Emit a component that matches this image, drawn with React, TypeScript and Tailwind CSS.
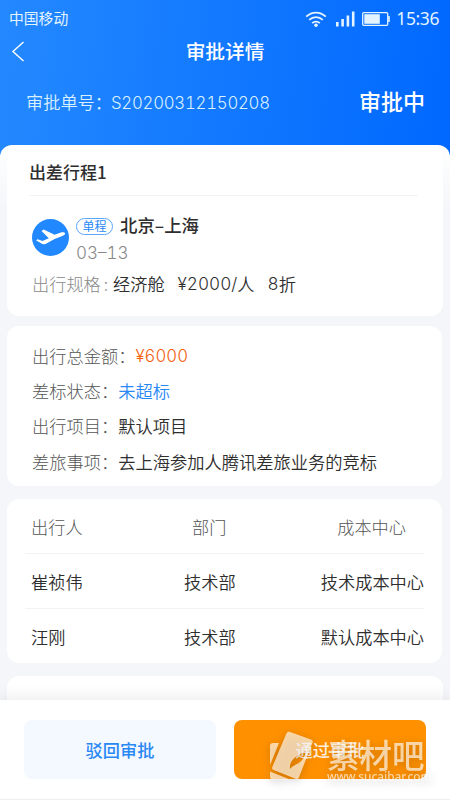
import type { ReactNode } from 'react';

const TRAVELERS = [
  { name: '崔祯伟', dept: '技术部', center: '技术成本中心' },
  { name: '汪刚', dept: '技术部', center: '默认成本中心' },
];

const SUMMARY = [
  { label: '出行总金额：', value: '¥6000', cls: 'text-[#f2600c]' },
  { label: '差标状态：', value: '未超标', cls: 'text-[#2a88f5]' },
  { label: '出行项目：', value: '默认项目', cls: 'text-[#2e2e2e]' },
  { label: '差旅事项：', value: '去上海参加人腾讯差旅业务的竞标', cls: 'text-[#2e2e2e]' },
];

function Num({ children, className = '' }: { children: ReactNode; className?: string }) {
  return (
    <span className={`tabular-nums [font-family:Inter,sans-serif] ${className}`}>{children}</span>
  );
}

// ── Status bar ───────────────────────────────────────────────
function StatusBar() {
  return (
    <div className="flex h-[37px] items-center justify-between pl-[9px] pr-[11px] text-[#e4f4ff]">
      <span className="text-[14.8px] leading-none">中国移动</span>
      <div className="flex items-center">
        <svg className="mt-px" width="22" height="17" viewBox="0 0 22 17" fill="none" stroke="currentColor" strokeWidth="1.8">
          <path d="M1.2 5.7C7 .3 15 .3 20.8 5.7M4.2 8.9c3.9-3.7 9.7-3.7 13.6 0M7.2 12.1c2.1-2.1 5.5-2.1 7.6 0" />
          <circle cx="11" cy="14.2" r="1.8" fill="currentColor" stroke="none" />
        </svg>
        <svg className="ml-[9px] mt-px" width="19" height="16" viewBox="0 0 19 16" fill="currentColor">
          <path d="M0 11h2.6v4.5H0zM5.3 8h2.6v7.5H5.3zM10.6 4.5h2.6v11h-2.6zM15.9.5h2.6v15h-2.6z" />
        </svg>
        <svg className="ml-[7px]" width="28" height="14" viewBox="0 0 28 14" fill="none" stroke="currentColor">
          <rect x=".7" y=".7" width="25" height="12.6" rx="1" strokeWidth="1.3" />
          <path d="M2.3 2.2h15.5v9.6H2.3z" fill="currentColor" stroke="none" />
          <path d="M27 4v6" strokeWidth="1.6" />
        </svg>
        <span className="ml-[6px] mt-px text-[17.5px] leading-none tracking-[-0.4px] [font-family:'Noto_Sans',sans-serif]">
          15:36
        </span>
      </div>
    </div>
  );
}

// ── Trip card ────────────────────────────────────────────────
function TripCard() {
  return (
    <section className="h-[171px] rounded-xl bg-white px-[25px]">
      <h2 className="ml-[-3px] flex h-[51px] items-center border-b border-[#f3f3f4] pt-[4px] text-[17px] font-medium text-[#2e2e2e]">
        出差行程1
      </h2>
      <div className="mt-[17px] flex h-[56px]">
        <svg className="mt-[6px] shrink-0" width="37" height="37" viewBox="0 0 37 37">
          <circle cx="18.5" cy="18.5" r="18.5" fill="#2288ff" />
          <path
            d="M4 21.200l1.700-.9 4.800 1.700 6.300-2.800-7.300-7.300 2.200-1.300 10.900 5.100 6.300-2.200c2-.6 3.700-.3 4.100.8.4 1-.7 2-2.600 2.700l-7.800 3.100L14 24.700c-1.700.7-3.300.8-4.500-.1z"
            fill="#fff"
          />
        </svg>
        <div className="ml-[7px]">
          <div className="flex h-[26px] items-center">
            <span className="flex h-[17px] w-[37px] items-center justify-center rounded-full border border-[#5ba6fb] text-[12px] leading-none text-[#2a88f5]">
              单程
            </span>
            <span className="mb-[2px] ml-[7px] text-[17.4px] font-medium leading-none text-[#2e2e2e]">北京–上海</span>
          </div>
          <Num className="block text-[17px] font-light leading-[29px] text-[#888]">03–13</Num>
        </div>
      </div>
      <p className="flex h-[30px] items-center whitespace-nowrap text-[17.2px] font-[350] text-[#2e2e2e]">
        <span className="w-[81px] font-light text-[#888]">出行规格<span className="ml-[3px]">:</span></span>
        <span>经济舱</span>
        <Num className="ml-[13px] font-light">¥2000/</Num>
        <span>人</span>
        <Num className="ml-[13px] font-light">8</Num>
        <span>折</span>
      </p>
    </section>
  );
}

// ── Site logo in the bottom corner ───────────────────────────
function CornerLogo() {
  return (
    <div className="absolute left-[269px] top-[27px] flex text-white/65 drop-shadow-[0_2px_4px_rgba(0,0,0,0.3)]">
      <svg width="46" height="55" viewBox="0 0 46 55" fill="currentColor">
        <path
          fillRule="evenodd"
          d="M17.5 6.2c.8-1.5 2-1.9 3.6-1.3L42 12.4c1.7.6 2.1 1.9 1.5 3.4L30 50.2c-.7 1.6-1.8 2.1-3.5 1.500L4.600 43C3.200 42.400 2.700 41.400 3.300 39.900zM21 42c-1-8 5-13 16-18-1.500 7-4 10-8 12.500-3.500 1.800-6 3-8 5.500z"
        />
        <path d="M1 19c0-2 1-3 3-3h6L1 38zM1 44.500l20 8H4c-2 0-3-1-3-3z" />
      </svg>
      <div className="ml-[12px] mt-[11px]">
        <p className="text-[32.5px] font-medium leading-[32px]">素材吧</p>
        <p className="text-[11.8px] font-medium leading-[12px] [font-family:'Noto_Sans',sans-serif]">www.sucaibar.com</p>
      </div>
    </div>
  );
}

export default function App() {
  return (
    <div className="flex h-[800px] w-[450px] flex-col overflow-hidden bg-linear-[96deg,#2489ff,#0068ff] bg-[length:450px_165px] bg-no-repeat [font-family:'Noto_Sans_CJK_SC',sans-serif]">
      {/* Header */}
      <header className="h-[145px] shrink-0 text-white">
        <StatusBar />
        <div className="grid h-[28px] grid-cols-[60px_1fr_60px] items-center">
          <svg className="ml-[11px]" width="14" height="21" viewBox="0 0 14 21" fill="none" stroke="currentColor" strokeWidth="1.4">
            <path d="M12.5 1L2 10.5 12.5 20" />
          </svg>
          <h1 className="text-center text-[19.7px] font-medium leading-none">审批详情</h1>
        </div>
        <div className="flex h-[72px] items-center justify-between pl-[26px] pr-[25px]">
          <p className="mt-[2px] flex items-center text-[17.2px] font-[350] leading-none text-[#d9f0ff]">
            审批单号：
            <Num className="ml-[-1px] mt-[2px] text-[16.8px] font-light tracking-[-0.25px]">S20200312150208</Num>
          </p>
          <span className="mb-[2px] text-[22px] font-medium leading-none">审批中</span>
        </div>
      </header>

      <main className="min-h-0 flex-1 overflow-hidden rounded-t-xl bg-linear-[180deg,#ffffff,#f4f6f9_65px] px-[7px]">
        <TripCard />

        <section className="mt-[10px] mr-px flex h-[160px] flex-col rounded-xl bg-white px-[25px] pt-[12px]">
          {SUMMARY.map((row) => (
            <p key={row.label} className="flex h-[35.3px] items-center text-[17.25px] font-[350]">
              <span className="font-light text-[#555]">{row.label}</span>
              {row.value.startsWith('¥') ? (
                <Num className={`mt-[2px] text-[16.8px] ${row.cls}`}>{row.value}</Num>
              ) : (
                <span className={row.cls}>{row.value}</span>
              )}
            </p>
          ))}
        </section>

        {/* Travelers */}
        <section className="mt-[13px] mr-px h-[164px] rounded-xl bg-white px-[18px] text-[17.2px] font-[350] text-[#2e2e2e]">
          <div className="grid h-[55px] grid-cols-[120px_114px_1fr] items-center border-b border-[#f3f3f4] pl-[6px] pt-px font-light text-[#555]">
            <span>出行人</span>
            <span className="pl-[41px]">部门</span>
            <span className="pr-[18px] text-right">成本中心</span>
          </div>
          {TRAVELERS.map((t) => (
            <div
              key={t.name}
              className="grid h-[55px] grid-cols-[120px_114px_1fr] items-center whitespace-nowrap border-b border-[#f3f3f4] pl-[6px] pt-px last:border-0 last:pt-0"
            >
              <span>{t.name}</span>
              <span className="pl-[33px]">{t.dept}</span>
              <span className="text-right">{t.center}</span>
            </div>
          ))}
        </section>

        <section className="mt-[13px] h-[60px] rounded-xl bg-white" />
      </main>

      {/* Actions */}
      <footer className="relative flex h-[100px] shrink-0 gap-[18px] border-b border-[#eee] bg-white px-[24px] pt-[20px] text-[17.2px] shadow-[0_-3px_14px_rgba(0,0,0,0.08)]">
        <button className="h-[59px] w-[192px] rounded-lg bg-[#f4f8ff] font-medium text-[#2a88f5]">驳回审批</button>
        <button className="h-[59px] w-[192px] rounded-lg bg-[#ff9100] font-medium text-[#fff2e0]">通过审批</button>
        <CornerLogo />
      </footer>
    </div>
  );
}
